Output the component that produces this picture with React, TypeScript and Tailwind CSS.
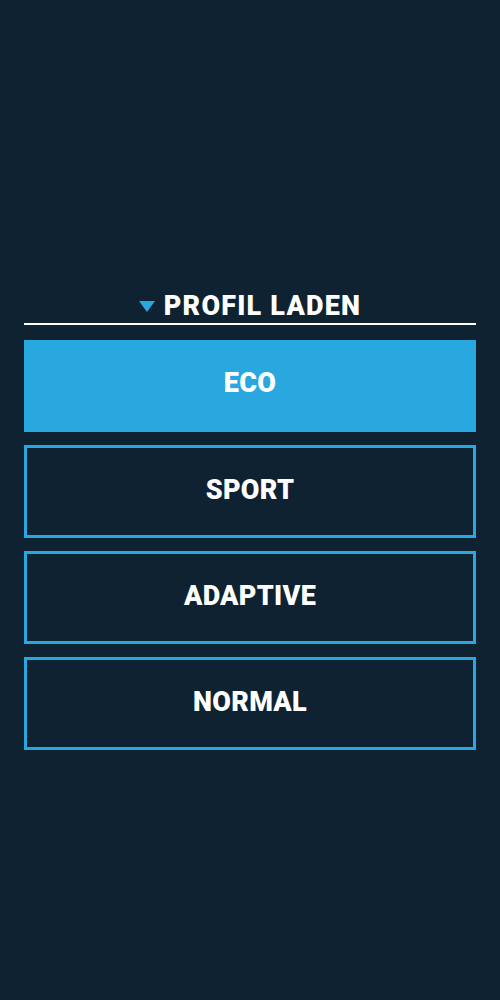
import { useState } from 'react';

const profiles = ['ECO', 'SPORT', 'ADAPTIVE', 'NORMAL'];

export default function App() {
  const [active, setActive] = useState('ECO');

  return (
    <div
      className="min-h-screen w-full bg-[#0f2231] px-6 pt-[289px]"
      style={{ fontFamily: 'Roboto, "Liberation Sans", sans-serif' }}
    >
      {/* Kopfzeile */}
      <div className="flex h-[34px] items-center justify-center gap-[9px]">
        <svg width="16" height="11" viewBox="0 0 16 11" className="mt-[1px]">
          <polygon points="0,0 16,0 8,11" fill="#29a8e0" />
        </svg>
        <span className="text-[27px] font-black leading-none tracking-[1.2px] text-white">
          PROFIL LADEN
        </span>
      </div>
      <div className="h-[2px] w-full bg-white" />

      {/* Profile */}
      <div className="mt-[15px] flex flex-col gap-[13px]">
        {profiles.map((p) => (
          <button
            key={p}
            onClick={() => setActive(p)}
            className={
              p === active
                ? 'flex h-[92px] w-full items-center justify-center bg-[#29a8e0] pb-[6px] text-[27px] font-black tracking-[0.3px] text-white'
                : 'flex h-[93px] w-full items-center justify-center border-[3px] border-[#29a8e0] pb-[2px] text-[27px] font-black tracking-[0.3px] text-white'
            }
          >
            {p}
          </button>
        ))}
      </div>
    </div>
  );
}
